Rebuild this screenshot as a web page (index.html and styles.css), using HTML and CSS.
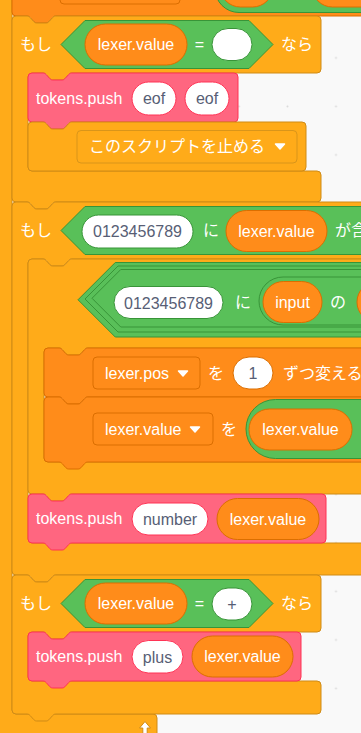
FILE: index.html
```html
<!DOCTYPE html>
<html>
    <head>
        <meta charset="UTF-8">
        <title>Scratch - lexer</title>
        <link rel="stylesheet" href="styles.css">
    </head>
    <body>
        <svg class="workspace" width="361" height="733" viewBox="0 0 361 733">
            <defs>
                <pattern id="grid" patternUnits="userSpaceOnUse" x="0" y="0" width="48.5" height="48.5">
                    <circle cx="45" cy="9.5" r="1" class="dot"></circle>
                </pattern>
            </defs>
            <rect width="361" height="733" fill="url(#grid)"></rect>

            <!-- outer loop -->
            <path class="control" d="M-20,-10 H12 V710 a4,4 0 0 0 4,4 H153 a4,4 0 0 1 4,4 V760 H-20 Z"></path>
            <path class="icon" d="M139.5,728 L145,721.5 L150.5,728 H147.2 V735 H142.8 V728 Z"></path>

            <!-- set block above -->
            <path class="data" d="M12,-10 H400 V16 H55.8 c-1.6,0 -2.4,0.8 -3.2,1.6 l-3.2,3.6 c-0.8,0.8 -1.6,1.8 -3.2,1.8 h-9.6 c-1.6,0 -2.4,-1 -3.2,-1.8 l-3.2,-3.6 c-0.8,-0.8 -1.6,-1.6 -3.2,-1.6 H16 a4,4 0 0 1 -4,-4 Z"></path>
            <rect class="data" x="60" y="-30" width="120" height="34" rx="4"></rect>
            <rect class="op" x="215" y="-36" width="205" height="48.5" rx="24"></rect>
            <rect class="data" x="220" y="-34" width="53" height="41" rx="20.5"></rect>
            <rect class="data" x="312" y="-34" width="108" height="41" rx="20.5"></rect>

            <!-- if lexer.value = "" -->
            <path class="control" d="M12,20 a4,4 0 0 1 4,-4 H27 c1.6,0 2.4,0.8 3.2,1.6 l3.2,3.6 c0.8,0.8 1.6,1.8 3.2,1.8 h9.6 c1.6,0 2.4,-1 3.2,-1.8 l3.2,-3.6 c0.8,-0.8 1.6,-1.6 3.2,-1.6 H317 a4,4 0 0 1 4,4 V69 a4,4 0 0 1 -4,4 H71.8 c-1.6,0 -2.4,0.8 -3.2,1.6 l-3.2,3.6 c-0.8,0.8 -1.6,1.8 -3.2,1.8 h-9.6 c-1.6,0 -2.4,-1 -3.2,-1.8 l-3.2,-3.6 c-0.8,-0.8 -1.6,-1.6 -3.2,-1.6 H32 a4,4 0 0 0 -4,4 V167 a4,4 0 0 0 4,4 H317 a4,4 0 0 1 4,4 V198 a4,4 0 0 1 -4,4 H55.8 c-1.6,0 -2.4,0.8 -3.2,1.6 l-3.2,3.6 c-0.8,0.8 -1.6,1.8 -3.2,1.8 h-9.6 c-1.6,0 -2.4,-1 -3.2,-1.8 l-3.2,-3.6 c-0.8,-0.8 -1.6,-1.6 -3.2,-1.6 H16 a4,4 0 0 1 -4,-4 Z"></path>
            <text class="label" x="20" y="50.2">もし</text>
            <path class="op" d="M61,44.5 L85,20.5 H249 L273,44.5 L249,68.5 H85 Z"></path>
            <rect class="data" x="85" y="24" width="102" height="41" rx="20.5"></rect>
            <text class="label mid" x="136" y="50.2">lexer.value</text>
            <text class="label mid" x="199.5" y="50.2">=</text>
            <rect class="field op-field" x="212" y="28.5" width="40" height="32" rx="16"></rect>
            <text class="label" x="281" y="50.2">なら</text>

            <path class="custom" d="M28,77 a4,4 0 0 1 4,-4 H43 c1.6,0 2.4,0.8 3.2,1.6 l3.2,3.6 c0.8,0.8 1.6,1.8 3.2,1.8 h9.6 c1.6,0 2.4,-1 3.2,-1.8 l3.2,-3.6 c0.8,-0.8 1.6,-1.6 3.2,-1.6 H234 a4,4 0 0 1 4,4 V118 a4,4 0 0 1 -4,4 H71.8 c-1.6,0 -2.4,0.8 -3.2,1.6 l-3.2,3.6 c-0.8,0.8 -1.6,1.8 -3.2,1.8 h-9.6 c-1.6,0 -2.4,-1 -3.2,-1.8 l-3.2,-3.6 c-0.8,-0.8 -1.6,-1.6 -3.2,-1.6 H32 a4,4 0 0 1 -4,-4 Z"></path>
            <text class="label" x="36" y="103.8">tokens.push</text>
            <rect class="field custom-field" x="132" y="82" width="44" height="33" rx="16.5"></rect>
            <text class="value mid" x="154" y="104.2">eof</text>
            <rect class="field custom-field" x="185" y="82" width="44" height="33" rx="16.5"></rect>
            <text class="value mid" x="207" y="104.2">eof</text>

            <path class="control" d="M28,126 a4,4 0 0 1 4,-4 H43 c1.6,0 2.4,0.8 3.2,1.6 l3.2,3.6 c0.8,0.8 1.6,1.8 3.2,1.8 h9.6 c1.6,0 2.4,-1 3.2,-1.8 l3.2,-3.6 c0.8,-0.8 1.6,-1.6 3.2,-1.6 H302 a4,4 0 0 1 4,4 V167 a4,4 0 0 1 -4,4 H32 a4,4 0 0 1 -4,-4 Z"></path>
            <rect class="control dropdown" x="77" y="130.5" width="220" height="32.5" rx="4"></rect>
            <text class="label" x="89" y="152.2">このスクリプトを止める</text>
            <path class="arrow" d="M275.5,144 h9 l-4.5,5 z"></path>

            <!-- if 0123456789 contains lexer.value -->
            <path class="control" d="M12,206 a4,4 0 0 1 4,-4 H27 c1.6,0 2.4,0.8 3.2,1.6 l3.2,3.6 c0.8,0.8 1.6,1.8 3.2,1.8 h9.6 c1.6,0 2.4,-1 3.2,-1.8 l3.2,-3.6 c0.8,-0.8 1.6,-1.6 3.2,-1.6 H420 V259 H71.8 c-1.6,0 -2.4,0.8 -3.2,1.6 l-3.2,3.6 c-0.8,0.8 -1.6,1.8 -3.2,1.8 h-9.6 c-1.6,0 -2.4,-1 -3.2,-1.8 l-3.2,-3.6 c-0.8,-0.8 -1.6,-1.6 -3.2,-1.6 H32 a4,4 0 0 0 -4,4 V539 a4,4 0 0 0 4,4 H420 V575 H55.8 c-1.6,0 -2.4,0.8 -3.2,1.6 l-3.2,3.6 c-0.8,0.8 -1.6,1.8 -3.2,1.8 h-9.6 c-1.6,0 -2.4,-1 -3.2,-1.8 l-3.2,-3.6 c-0.8,-0.8 -1.6,-1.6 -3.2,-1.6 H16 a4,4 0 0 1 -4,-4 Z"></path>
            <text class="label" x="20" y="236.2">もし</text>
            <path class="op" d="M61,230.5 L85,206.5 H420 V254.5 H85 Z"></path>
            <rect class="field op-field" x="82" y="215" width="111" height="33" rx="16.5"></rect>
            <text class="value mid" x="137.5" y="237">0123456789</text>
            <text class="label" x="203" y="236.2">に</text>
            <rect class="data" x="226" y="210.5" width="101" height="41" rx="20.5"></rect>
            <text class="label mid" x="276.5" y="236.7">lexer.value</text>
            <text class="label" x="335" y="236.2">が含まれる</text>

            <!-- repeat until -->
            <path class="control" d="M28,263 a4,4 0 0 1 4,-4 H43 c1.6,0 2.4,0.8 3.2,1.6 l3.2,3.6 c0.8,0.8 1.6,1.8 3.2,1.8 h9.6 c1.6,0 2.4,-1 3.2,-1.8 l3.2,-3.6 c0.8,-0.8 1.6,-1.6 3.2,-1.6 H420 V348 H87.8 c-1.6,0 -2.4,0.8 -3.2,1.6 l-3.2,3.6 c-0.8,0.8 -1.6,1.8 -3.2,1.8 h-9.6 c-1.6,0 -2.4,-1 -3.2,-1.8 l-3.2,-3.6 c-0.8,-0.8 -1.6,-1.6 -3.2,-1.6 H48 a4,4 0 0 0 -4,4 V458 a4,4 0 0 0 4,4 H420 V494 H71.8 c-1.6,0 -2.4,0.8 -3.2,1.6 l-3.2,3.6 c-0.8,0.8 -1.6,1.8 -3.2,1.8 h-9.6 c-1.6,0 -2.4,-1 -3.2,-1.8 l-3.2,-3.6 c-0.8,-0.8 -1.6,-1.6 -3.2,-1.6 H32 a4,4 0 0 1 -4,-4 Z"></path>
            <path class="op" d="M78,299.75 L115.25,262.5 H420 V337 H115.25 Z"></path>
            <path class="op" d="M85,299 L118,266 H420 V332 H118 Z"></path>
            <path class="op" d="M92,298.25 L120.75,269.5 H420 V327 H120.75 Z"></path>
            <rect class="field op-field" x="114" y="286.5" width="109" height="32" rx="16"></rect>
            <text class="value mid" x="168.5" y="308.5">0123456789</text>
            <text class="label" x="235" y="307.7">に</text>
            <rect class="op" x="259" y="277" width="200" height="48" rx="24"></rect>
            <rect class="data" x="263" y="281.5" width="59" height="41" rx="20.5"></rect>
            <text class="label mid" x="292.5" y="307.7">input</text>
            <text class="label" x="330" y="307.7">の</text>
            <rect class="data" x="357" y="281.5" width="80" height="41" rx="20.5"></rect>

            <path class="data" d="M44,352 a4,4 0 0 1 4,-4 H59 c1.6,0 2.4,0.8 3.2,1.6 l3.2,3.6 c0.8,0.8 1.6,1.8 3.2,1.8 h9.6 c1.6,0 2.4,-1 3.2,-1.8 l3.2,-3.6 c0.8,-0.8 1.6,-1.6 3.2,-1.6 H420 V397 H87.8 c-1.6,0 -2.4,0.8 -3.2,1.6 l-3.2,3.6 c-0.8,0.8 -1.6,1.8 -3.2,1.8 h-9.6 c-1.6,0 -2.4,-1 -3.2,-1.8 l-3.2,-3.6 c-0.8,-0.8 -1.6,-1.6 -3.2,-1.6 H48 a4,4 0 0 1 -4,-4 Z"></path>
            <rect class="data dropdown" x="93" y="357" width="107" height="32" rx="4"></rect>
            <text class="label" x="105" y="378.7">lexer.pos</text>
            <path class="arrow" d="M178.5,371 h9 l-4.5,5 z"></path>
            <text class="label" x="208" y="378.7">を</text>
            <rect class="field data-field" x="233" y="357" width="40" height="32" rx="16"></rect>
            <text class="value mid" x="253" y="379">1</text>
            <text class="label" x="283" y="378.7">ずつ変える</text>

            <path class="data" d="M44,401 a4,4 0 0 1 4,-4 H59 c1.6,0 2.4,0.8 3.2,1.6 l3.2,3.6 c0.8,0.8 1.6,1.8 3.2,1.8 h9.6 c1.6,0 2.4,-1 3.2,-1.8 l3.2,-3.6 c0.8,-0.8 1.6,-1.6 3.2,-1.6 H420 V462 H87.8 c-1.6,0 -2.4,0.8 -3.2,1.6 l-3.2,3.6 c-0.8,0.8 -1.6,1.8 -3.2,1.8 h-9.6 c-1.6,0 -2.4,-1 -3.2,-1.8 l-3.2,-3.6 c-0.8,-0.8 -1.6,-1.6 -3.2,-1.6 H48 a4,4 0 0 1 -4,-4 Z"></path>
            <rect class="data dropdown" x="93" y="413" width="120" height="32" rx="4"></rect>
            <text class="label" x="105" y="434.7">lexer.value</text>
            <path class="arrow" d="M190.5,427 h9 l-4.5,5 z"></path>
            <text class="label" x="221" y="434.7">を</text>
            <rect class="op" x="246" y="399.5" width="200" height="59" rx="29.5"></rect>
            <rect class="data" x="249" y="409" width="103" height="41" rx="20.5"></rect>
            <text class="label mid" x="300.5" y="434.7">lexer.value</text>

            <path class="custom" d="M28,498 a4,4 0 0 1 4,-4 H43 c1.6,0 2.4,0.8 3.2,1.6 l3.2,3.6 c0.8,0.8 1.6,1.8 3.2,1.8 h9.6 c1.6,0 2.4,-1 3.2,-1.8 l3.2,-3.6 c0.8,-0.8 1.6,-1.6 3.2,-1.6 H322 a4,4 0 0 1 4,4 V539 a4,4 0 0 1 -4,4 H71.8 c-1.6,0 -2.4,0.8 -3.2,1.6 l-3.2,3.6 c-0.8,0.8 -1.6,1.8 -3.2,1.8 h-9.6 c-1.6,0 -2.4,-1 -3.2,-1.8 l-3.2,-3.6 c-0.8,-0.8 -1.6,-1.6 -3.2,-1.6 H32 a4,4 0 0 1 -4,-4 Z"></path>
            <text class="label" x="36" y="524.2">tokens.push</text>
            <rect class="field custom-field" x="132" y="503" width="76" height="32" rx="16"></rect>
            <text class="value mid" x="170" y="524.7">number</text>
            <rect class="data" x="217" y="498.5" width="102" height="41" rx="20.5"></rect>
            <text class="label mid" x="268" y="524.7">lexer.value</text>

            <!-- if lexer.value = "+" -->
            <path class="control" d="M12,579 a4,4 0 0 1 4,-4 H27 c1.6,0 2.4,0.8 3.2,1.6 l3.2,3.6 c0.8,0.8 1.6,1.8 3.2,1.8 h9.6 c1.6,0 2.4,-1 3.2,-1.8 l3.2,-3.6 c0.8,-0.8 1.6,-1.6 3.2,-1.6 H317 a4,4 0 0 1 4,4 V628 a4,4 0 0 1 -4,4 H71.8 c-1.6,0 -2.4,0.8 -3.2,1.6 l-3.2,3.6 c-0.8,0.8 -1.6,1.8 -3.2,1.8 h-9.6 c-1.6,0 -2.4,-1 -3.2,-1.8 l-3.2,-3.6 c-0.8,-0.8 -1.6,-1.6 -3.2,-1.6 H32 a4,4 0 0 0 -4,4 V677 a4,4 0 0 0 4,4 H317 a4,4 0 0 1 4,4 V710 a4,4 0 0 1 -4,4 H55.8 c-1.6,0 -2.4,0.8 -3.2,1.6 l-3.2,3.6 c-0.8,0.8 -1.6,1.8 -3.2,1.8 h-9.6 c-1.6,0 -2.4,-1 -3.2,-1.8 l-3.2,-3.6 c-0.8,-0.8 -1.6,-1.6 -3.2,-1.6 H16 a4,4 0 0 1 -4,-4 Z"></path>
            <text class="label" x="20" y="609.2">もし</text>
            <path class="op" d="M61,603.5 L85,579.5 H249 L273,603.5 L249,627.5 H85 Z"></path>
            <rect class="data" x="85" y="583" width="102" height="41" rx="20.5"></rect>
            <text class="label mid" x="136" y="609.2">lexer.value</text>
            <text class="label mid" x="199.5" y="609.2">=</text>
            <rect class="field op-field" x="212" y="588" width="40" height="32" rx="16"></rect>
            <text class="value mid" x="232" y="609.5">+</text>
            <text class="label" x="281" y="609.2">なら</text>

            <path class="custom" d="M28,636 a4,4 0 0 1 4,-4 H43 c1.6,0 2.4,0.8 3.2,1.6 l3.2,3.6 c0.8,0.8 1.6,1.8 3.2,1.8 h9.6 c1.6,0 2.4,-1 3.2,-1.8 l3.2,-3.6 c0.8,-0.8 1.6,-1.6 3.2,-1.6 H297 a4,4 0 0 1 4,4 V677 a4,4 0 0 1 -4,4 H71.8 c-1.6,0 -2.4,0.8 -3.2,1.6 l-3.2,3.6 c-0.8,0.8 -1.6,1.8 -3.2,1.8 h-9.6 c-1.6,0 -2.4,-1 -3.2,-1.8 l-3.2,-3.6 c-0.8,-0.8 -1.6,-1.6 -3.2,-1.6 H32 a4,4 0 0 1 -4,-4 Z"></path>
            <text class="label" x="36" y="662.2">tokens.push</text>
            <rect class="field custom-field" x="132" y="640.5" width="51" height="32.5" rx="16.25"></rect>
            <text class="value mid" x="157.5" y="662.5">plus</text>
            <rect class="data" x="192" y="636" width="101" height="41" rx="20.5"></rect>
            <text class="label mid" x="242.5" y="662.2">lexer.value</text>
        </svg>
    </body>
</html>
```

FILE: styles.css
```css
html, body {
    margin: 0;
    padding: 0;
    background: #f9f9f9;
    overflow: hidden;
}
.workspace {
    display: block;
}
.dot {
    fill: #d9d9d9;
}
.control {
    fill: #ffab19;
    stroke: #cf8b17;
    stroke-width: 1;
}
.data {
    fill: #ff8c1a;
    stroke: #db6e00;
    stroke-width: 1;
}
.op {
    fill: #59c059;
    stroke: #389438;
    stroke-width: 1;
}
.custom {
    fill: #ff6680;
    stroke: #ff3355;
    stroke-width: 1;
}
.dropdown.control {
    stroke: #d9951a;
}
.field {
    fill: #fff;
    stroke-width: 1;
}
.op-field {
    stroke: #389438;
}
.custom-field {
    stroke: #ff3355;
}
.data-field {
    stroke: #db6e00;
}
.label, .value {
    font-family: "Liberation Sans", "Noto Sans CJK JP", sans-serif;
    font-size: 16px;
}
.label {
    fill: #fff;
}
.value {
    fill: #575e75;
}
.mid {
    text-anchor: middle;
}
.arrow {
    fill: #fff;
    stroke: #fff;
    stroke-width: 1.5;
    stroke-linejoin: round;
}
.icon {
    fill: #fff;
    stroke: #cf8b17;
    stroke-width: 1;
}
```
